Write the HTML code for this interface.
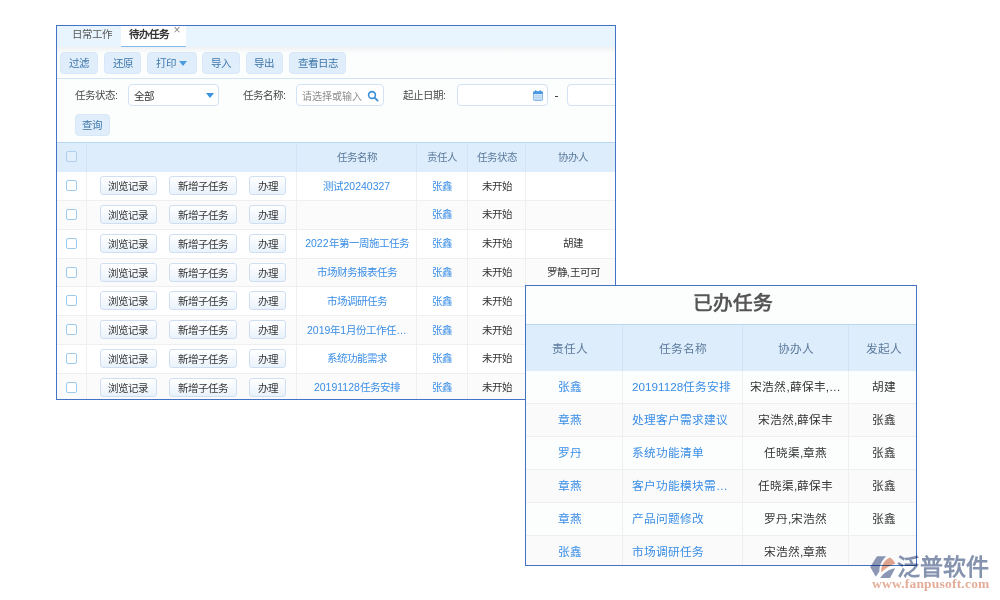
<!DOCTYPE html>
<html lang="zh-CN">
<head>
<meta charset="utf-8">
<title>待办任务</title>
<style>
html,body{margin:0;padding:0;background:#fff;}
body{width:1000px;height:600px;position:relative;overflow:hidden;font-family:"Liberation Sans",sans-serif;color:#333;}
*{box-sizing:border-box;}
.abs{position:absolute;}
#p1{position:absolute;left:56px;top:25px;width:560px;height:375px;border:1px solid #4472c4;background:#fcfdfd;overflow:hidden;font-size:10.5px;}
#tabs{position:absolute;left:0;top:0;width:100%;height:21px;background:#e8f4fe;}
#tabshadow{position:absolute;left:0;top:21px;width:100%;height:6px;background:linear-gradient(#eef0f2,#fcfdfd);}
.tab{position:absolute;top:0;height:21px;line-height:17px;white-space:nowrap;color:#555;}
.tab.on{background:#fff;border-bottom:1px solid #84bbe8;font-weight:bold;color:#333;}
.tb{position:absolute;top:26px;height:22px;line-height:20px;background:#e0eefb;border:1px solid #d8e8f8;border-radius:4px;color:#3d76aa;text-align:center;white-space:nowrap;}
#sep{position:absolute;left:0;top:52px;width:100%;height:1px;background:#d3e4f4;}
.lbl{position:absolute;top:58px;height:22px;line-height:22px;white-space:nowrap;color:#484848;}
.inp{position:absolute;top:58px;height:22px;line-height:21px;padding-top:1px;border:1px solid #d3e3f4;border-radius:4px;background:#fff;white-space:nowrap;}
#thead{position:absolute;left:0;top:116px;width:570px;height:30px;background:#deedfb;border-top:1px solid #b9d7f1;}
.th{position:absolute;top:0;height:29px;line-height:29px;text-align:center;color:#5a7a9c;border-left:1px solid #d3e5f5;white-space:nowrap;}
.row{position:absolute;left:0;width:570px;}
.td{position:absolute;top:0;height:100%;text-align:center;border-left:1px solid #efefef;border-bottom:1px solid #efefef;white-space:nowrap;overflow:hidden;}
.cb{position:absolute;width:11px;height:11px;border:1px solid #9ccbee;border-radius:2px;background:#fff;}
.rb{position:absolute;height:19px;line-height:18px;border:1px solid #cfdff1;border-radius:3px;background:linear-gradient(#ffffff,#e9f2fb);color:#333;text-align:center;white-space:nowrap;}
a{color:#3a8ee6;text-decoration:none;}
#p2{position:absolute;left:525px;top:285px;width:392px;height:281px;border:1px solid #4472c4;background:#fcfdfd;overflow:hidden;font-size:11.7px;}
#title{position:absolute;left:0;top:0;width:414px;height:38px;line-height:35px;text-align:center;font-size:19.6px;font-weight:bold;color:#555;}
#h2{position:absolute;left:0;top:38px;width:400px;height:48px;background:#deedfb;border-top:1px solid #b9d7f1;}
.th2{position:absolute;top:0;height:47px;line-height:47px;text-align:center;color:#5a7a9c;border-left:1px solid #d0e2f3;white-space:nowrap;}
.row2{position:absolute;left:0;width:400px;height:33px;}
.td2{position:absolute;top:0;height:33px;line-height:32px;text-align:center;border-left:1px solid #efefef;border-bottom:1px solid #efefef;white-space:nowrap;overflow:hidden;}
</style>
</head>
<body>
<div id="p1">
<div id="tabs"></div><div id="tabshadow"></div>
<div class="tab" style="left:15px;">日常工作</div>
<div class="tab on" style="left:64px;width:65px;padding-left:8px;">待办任务<span style="position:absolute;left:52.5px;top:-4.5px;font-weight:normal;color:#888;font-size:12px;">×</span></div>
<div class="tb" style="left:3px;width:38px;">过滤</div>
<div class="tb" style="left:47px;width:37px;">还原</div>
<div class="tb" style="left:90px;width:49.5px;">打印 <span style="display:inline-block;width:0;height:0;border-left:4px solid transparent;border-right:4px solid transparent;border-top:5px solid #4a9be0;vertical-align:middle;margin-left:0px;margin-top:-2px;"></span></div>
<div class="tb" style="left:145px;width:38px;">导入</div>
<div class="tb" style="left:188.5px;width:37.5px;">导出</div>
<div class="tb" style="left:232px;width:57px;">查看日志</div>
<div id="sep"></div>
<div class="lbl" style="left:18px;">任务状态:</div>
<div class="inp" style="left:71px;width:91px;padding-left:5px;color:#333;">全部<span style="position:absolute;left:77px;top:8px;width:0;height:0;border-left:4px solid transparent;border-right:4px solid transparent;border-top:5px solid #3a93e0;"></span></div>
<div class="lbl" style="left:186px;">任务名称:</div>
<div class="inp" style="left:239px;width:88px;padding-left:5px;color:#8c8c8c;font-size:10px;">请选择或输入<svg style="position:absolute;left:70px;top:5px;" width="12" height="12" viewBox="0 0 12 12"><circle cx="5" cy="5" r="3.4" fill="none" stroke="#3a8fdc" stroke-width="1.6"/><path d="M7.6 7.6 L10.6 10.6" stroke="#3a8fdc" stroke-width="1.8" stroke-linecap="round"/></svg></div>
<div class="lbl" style="left:346px;">起止日期:</div>
<div class="inp" style="left:400px;width:91px;"><svg style="position:absolute;left:75px;top:5px;" width="10" height="11" viewBox="0 0 10 11"><rect x="0.4" y="1.6" width="9.2" height="8.8" rx="1.1" fill="#e3eefb" stroke="#5aa0e4" stroke-width="0.8"/><rect x="0.2" y="1.6" width="9.6" height="2.5" rx="0.6" fill="#4a97e2"/><rect x="2" y="0.2" width="1.5" height="2.6" rx="0.4" fill="#4a97e2"/><rect x="6.5" y="0.2" width="1.5" height="2.6" rx="0.4" fill="#4a97e2"/><path d="M1 5.8H9M1 7.4H9M1 9H9M3 4.2V10M5 4.2V10M7 4.2V10" stroke="#9cc4ee" stroke-width="0.5"/></svg></div>
<div class="abs" style="left:498px;top:70px;width:3.4px;height:1.2px;background:#444;"></div>
<div class="inp" style="left:510px;width:91px;"></div>
<div class="tb" style="left:17.5px;top:88px;width:35.5px;">查询</div>
<div id="thead"><div class="cb" style="left:9px;top:8px;background:#e2effc;border-color:#aed0ee;"></div><div class="th" style="left:0px;width:29px;border-left:none;"></div><div class="th" style="left:29px;width:210.3px;"></div><div class="th" style="left:239.3px;width:120.1px;">任务名称</div><div class="th" style="left:359.4px;width:51.0px;">责任人</div><div class="th" style="left:410.4px;width:58.0px;">任务状态</div><div class="th" style="left:468.4px;width:94.6px;">协办人</div></div>
<div class="row" style="top:146px;height:29px;background:#ffffff;"><div class="td" style="left:0;width:29px;border-left:none;"></div><div class="cb" style="left:9px;top:8px;"></div><div class="td" style="left:29px;width:210.3px;"><div class="rb" style="left:13.2px;top:4px;width:56.6px;">浏览记录</div><div class="rb" style="left:82.3px;top:4px;width:67.5px;">新增子任务</div><div class="rb" style="left:162.0px;top:4px;width:37px;">办理</div></div><div class="td" style="left:239.3px;width:120.1px;padding-top:4px;line-height:20px;"><a>测试20240327</a></div><div class="td" style="left:359.4px;width:51px;padding-top:4px;line-height:20px;"><a>张鑫</a></div><div class="td" style="left:410.4px;width:58px;padding-top:4px;line-height:20px;">未开始</div><div class="td" style="left:468.4px;width:94.6px;padding-top:4px;line-height:20px;"></div></div>
<div class="row" style="top:175px;height:29px;background:#fbfbfc;"><div class="td" style="left:0;width:29px;border-left:none;"></div><div class="cb" style="left:9px;top:8px;"></div><div class="td" style="left:29px;width:210.3px;"><div class="rb" style="left:13.2px;top:4px;width:56.6px;">浏览记录</div><div class="rb" style="left:82.3px;top:4px;width:67.5px;">新增子任务</div><div class="rb" style="left:162.0px;top:4px;width:37px;">办理</div></div><div class="td" style="left:239.3px;width:120.1px;padding-top:3px;line-height:20px;"><a></a></div><div class="td" style="left:359.4px;width:51px;padding-top:3px;line-height:20px;"><a>张鑫</a></div><div class="td" style="left:410.4px;width:58px;padding-top:3px;line-height:20px;">未开始</div><div class="td" style="left:468.4px;width:94.6px;padding-top:3px;line-height:20px;"></div></div>
<div class="row" style="top:204px;height:29px;background:#ffffff;"><div class="td" style="left:0;width:29px;border-left:none;"></div><div class="cb" style="left:9px;top:8px;"></div><div class="td" style="left:29px;width:210.3px;"><div class="rb" style="left:13.2px;top:4px;width:56.6px;">浏览记录</div><div class="rb" style="left:82.3px;top:4px;width:67.5px;">新增子任务</div><div class="rb" style="left:162.0px;top:4px;width:37px;">办理</div></div><div class="td" style="left:239.3px;width:120.1px;padding-top:3px;line-height:20px;"><a>2022年第一周施工任务</a></div><div class="td" style="left:359.4px;width:51px;padding-top:3px;line-height:20px;"><a>张鑫</a></div><div class="td" style="left:410.4px;width:58px;padding-top:3px;line-height:20px;">未开始</div><div class="td" style="left:468.4px;width:94.6px;padding-top:3px;line-height:20px;">胡建</div></div>
<div class="row" style="top:233px;height:28px;background:#fbfbfc;"><div class="td" style="left:0;width:29px;border-left:none;"></div><div class="cb" style="left:9px;top:8px;"></div><div class="td" style="left:29px;width:210.3px;"><div class="rb" style="left:13.2px;top:4px;width:56.6px;">浏览记录</div><div class="rb" style="left:82.3px;top:4px;width:67.5px;">新增子任务</div><div class="rb" style="left:162.0px;top:4px;width:37px;">办理</div></div><div class="td" style="left:239.3px;width:120.1px;padding-top:3px;line-height:20px;"><a>市场财务报表任务</a></div><div class="td" style="left:359.4px;width:51px;padding-top:3px;line-height:20px;"><a>张鑫</a></div><div class="td" style="left:410.4px;width:58px;padding-top:3px;line-height:20px;">未开始</div><div class="td" style="left:468.4px;width:94.6px;padding-top:3px;line-height:20px;">罗静,王可可</div></div>
<div class="row" style="top:261px;height:29px;background:#ffffff;"><div class="td" style="left:0;width:29px;border-left:none;"></div><div class="cb" style="left:9px;top:8px;"></div><div class="td" style="left:29px;width:210.3px;"><div class="rb" style="left:13.2px;top:4px;width:56.6px;">浏览记录</div><div class="rb" style="left:82.3px;top:4px;width:67.5px;">新增子任务</div><div class="rb" style="left:162.0px;top:4px;width:37px;">办理</div></div><div class="td" style="left:239.3px;width:120.1px;padding-top:4px;line-height:20px;"><a>市场调研任务</a></div><div class="td" style="left:359.4px;width:51px;padding-top:4px;line-height:20px;"><a>张鑫</a></div><div class="td" style="left:410.4px;width:58px;padding-top:4px;line-height:20px;">未开始</div><div class="td" style="left:468.4px;width:94.6px;padding-top:4px;line-height:20px;"></div></div>
<div class="row" style="top:290px;height:29px;background:#fbfbfc;"><div class="td" style="left:0;width:29px;border-left:none;"></div><div class="cb" style="left:9px;top:8px;"></div><div class="td" style="left:29px;width:210.3px;"><div class="rb" style="left:13.2px;top:4px;width:56.6px;">浏览记录</div><div class="rb" style="left:82.3px;top:4px;width:67.5px;">新增子任务</div><div class="rb" style="left:162.0px;top:4px;width:37px;">办理</div></div><div class="td" style="left:239.3px;width:120.1px;padding-top:4px;line-height:20px;"><a>2019年1月份工作任…</a></div><div class="td" style="left:359.4px;width:51px;padding-top:4px;line-height:20px;"><a>张鑫</a></div><div class="td" style="left:410.4px;width:58px;padding-top:4px;line-height:20px;">未开始</div><div class="td" style="left:468.4px;width:94.6px;padding-top:4px;line-height:20px;"></div></div>
<div class="row" style="top:319px;height:29px;background:#ffffff;"><div class="td" style="left:0;width:29px;border-left:none;"></div><div class="cb" style="left:9px;top:8px;"></div><div class="td" style="left:29px;width:210.3px;"><div class="rb" style="left:13.2px;top:4px;width:56.6px;">浏览记录</div><div class="rb" style="left:82.3px;top:4px;width:67.5px;">新增子任务</div><div class="rb" style="left:162.0px;top:4px;width:37px;">办理</div></div><div class="td" style="left:239.3px;width:120.1px;padding-top:3px;line-height:20px;"><a>系统功能需求</a></div><div class="td" style="left:359.4px;width:51px;padding-top:3px;line-height:20px;"><a>张鑫</a></div><div class="td" style="left:410.4px;width:58px;padding-top:3px;line-height:20px;">未开始</div><div class="td" style="left:468.4px;width:94.6px;padding-top:3px;line-height:20px;"></div></div>
<div class="row" style="top:348px;height:29px;background:#fbfbfc;"><div class="td" style="left:0;width:29px;border-left:none;"></div><div class="cb" style="left:9px;top:8px;"></div><div class="td" style="left:29px;width:210.3px;"><div class="rb" style="left:13.2px;top:4px;width:56.6px;">浏览记录</div><div class="rb" style="left:82.3px;top:4px;width:67.5px;">新增子任务</div><div class="rb" style="left:162.0px;top:4px;width:37px;">办理</div></div><div class="td" style="left:239.3px;width:120.1px;padding-top:3px;line-height:20px;"><a>20191128任务安排</a></div><div class="td" style="left:359.4px;width:51px;padding-top:3px;line-height:20px;"><a>张鑫</a></div><div class="td" style="left:410.4px;width:58px;padding-top:3px;line-height:20px;">未开始</div><div class="td" style="left:468.4px;width:94.6px;padding-top:3px;line-height:20px;"></div></div>
</div>
<div id="p2">
<div id="title">已办任务</div>
<div id="h2"><div class="th2" style="left:0px;width:96px;border-left:none;padding-right:9px;">责任人</div><div class="th2" style="left:96px;width:120px;">任务名称</div><div class="th2" style="left:216px;width:106px;">协办人</div><div class="th2" style="left:322px;width:71px;">发起人</div></div>
<div class="row2" style="top:85.4px;background:#fcfdfd;"><div class="td2" style="left:0px;width:96px;border-left:none;padding-right:9px;"><a>张鑫</a></div><div class="td2" style="left:96px;width:120px;text-align:left;padding-left:9px;"><a>20191128任务安排</a></div><div class="td2" style="left:216px;width:106px;">宋浩然,薛保丰,…</div><div class="td2" style="left:322px;width:71px;">胡建</div></div>
<div class="row2" style="top:118.4px;background:#fafafb;"><div class="td2" style="left:0px;width:96px;border-left:none;padding-right:9px;"><a>章燕</a></div><div class="td2" style="left:96px;width:120px;text-align:left;padding-left:9px;"><a>处理客户需求建议</a></div><div class="td2" style="left:216px;width:106px;">宋浩然,薛保丰</div><div class="td2" style="left:322px;width:71px;">张鑫</div></div>
<div class="row2" style="top:151.4px;background:#fcfdfd;"><div class="td2" style="left:0px;width:96px;border-left:none;padding-right:9px;"><a>罗丹</a></div><div class="td2" style="left:96px;width:120px;text-align:left;padding-left:9px;"><a>系统功能清单</a></div><div class="td2" style="left:216px;width:106px;">任晓渠,章燕</div><div class="td2" style="left:322px;width:71px;">张鑫</div></div>
<div class="row2" style="top:184.4px;background:#fafafb;"><div class="td2" style="left:0px;width:96px;border-left:none;padding-right:9px;"><a>章燕</a></div><div class="td2" style="left:96px;width:120px;text-align:left;padding-left:9px;"><a>客户功能模块需…</a></div><div class="td2" style="left:216px;width:106px;">任晓渠,薛保丰</div><div class="td2" style="left:322px;width:71px;">张鑫</div></div>
<div class="row2" style="top:217.4px;background:#fcfdfd;"><div class="td2" style="left:0px;width:96px;border-left:none;padding-right:9px;"><a>章燕</a></div><div class="td2" style="left:96px;width:120px;text-align:left;padding-left:9px;"><a>产品问题修改</a></div><div class="td2" style="left:216px;width:106px;">罗丹,宋浩然</div><div class="td2" style="left:322px;width:71px;">张鑫</div></div>
<div class="row2" style="top:250.4px;background:#fafafb;"><div class="td2" style="left:0px;width:96px;border-left:none;padding-right:9px;"><a>张鑫</a></div><div class="td2" style="left:96px;width:120px;text-align:left;padding-left:9px;"><a>市场调研任务</a></div><div class="td2" style="left:216px;width:106px;">宋浩然,章燕</div><div class="td2" style="left:322px;width:71px;"></div></div>
</div>
<div id="logo" style="position:absolute;left:868px;top:552px;width:130px;height:44px;mix-blend-mode:multiply;">
<svg style="position:absolute;left:0;top:0;" width="32" height="30" viewBox="0 0 32 30">
<path d="M9 4.2 L18.2 4.2 C13.5 8.5 11.2 14 11.4 19.5 L7.8 24.8 L2.2 15 Z" fill="#8b97b4"/>
<path d="M21.8 5.4 C24.6 7 26.4 9.2 27.2 11.8 C22.5 13.2 17.5 16.2 13.2 20.4 C12.6 14.4 15.6 8.6 21.8 5.4 Z" fill="#e2a68e"/>
<path d="M27.2 16.2 L22 25.9 L12.2 25.9 C15.4 21 20.6 17.4 27.2 16.2 Z" fill="#8b97b4"/>
</svg>
<div style="position:absolute;left:29px;top:0px;font-size:23px;line-height:30px;font-weight:bold;color:#8593af;white-space:nowrap;letter-spacing:0px;">泛普软件</div>
<div id="url" style="position:absolute;left:4px;top:25px;font-family:'Liberation Serif',serif;font-weight:bold;font-size:13.5px;line-height:14px;color:#e4ad9a;letter-spacing:0.21px;white-space:nowrap;">www.fanpusoft.com</div>
</div>
</body>
</html>
